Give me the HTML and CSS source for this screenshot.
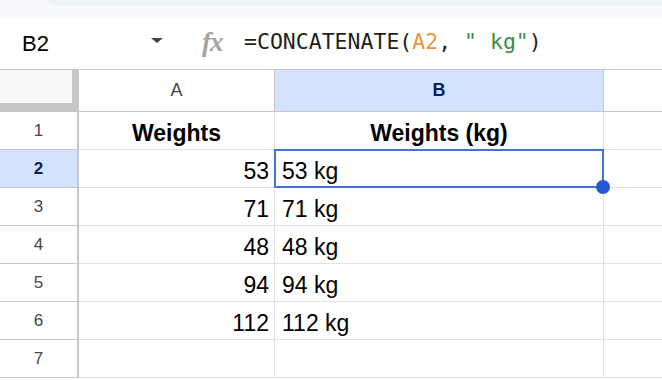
FILE: index.html
```html
<!DOCTYPE html>
<html lang="en">
<head>
    <meta charset="UTF-8">
    <title>Weights sheet</title>
    <link rel="stylesheet" href="styles.css">
</head>
<body>

    <!-- Top strip -->
    <div class="top-strip">
        <div class="toolbar-edge"></div>
    </div>

    <!-- Formula bar -->
    <div class="formula-bar">
        <div class="name-box">B2</div>
        <div class="name-arrow"></div>
        <div class="fx">fx</div>
        <div class="formula">=CONCATENATE(<span class="ref">A2</span>, <span class="str">" kg"</span>)</div>
    </div>

    <!-- Grid -->
    <div class="sheet">
        <div class="corner"></div>
        <div class="col-head">A</div>
        <div class="col-head active">B</div>
        <div class="col-head last"></div>

        <div class="row-head">1</div>
        <div class="cell bold center">Weights</div>
        <div class="cell bold center">Weights (kg)</div>
        <div class="cell last"></div>

        <div class="row-head active">2</div>
        <div class="cell num">53</div>
        <div class="cell selected">53 kg<div class="sel-box"><span class="handle"></span></div></div>
        <div class="cell last"></div>

        <div class="row-head">3</div>
        <div class="cell num">71</div>
        <div class="cell">71 kg</div>
        <div class="cell last"></div>

        <div class="row-head">4</div>
        <div class="cell num">48</div>
        <div class="cell">48 kg</div>
        <div class="cell last"></div>

        <div class="row-head">5</div>
        <div class="cell num">94</div>
        <div class="cell">94 kg</div>
        <div class="cell last"></div>

        <div class="row-head">6</div>
        <div class="cell num">112</div>
        <div class="cell">112 kg</div>
        <div class="cell last"></div>

        <div class="row-head">7</div>
        <div class="cell"></div>
        <div class="cell"></div>
        <div class="cell last"></div>
    </div>

</body>
</html>
```

FILE: styles.css
```css
body {
    margin: 0;
    width: 662px;
    height: 380px;
    overflow: hidden;
    background: white;
    font-family: "Liberation Sans", Arial, sans-serif;
    color: #000;
}

/* Top strip */
.top-strip {
    height: 18px;
    background: #f8f9fc;
}

.toolbar-edge {
    margin-left: 48px;
    height: 5px;
    background: #eef1f6;
    border-bottom-left-radius: 8px;
}

/* Formula bar */
.formula-bar {
    height: 51px;
    border-bottom: 1px solid #c7c7c7;
    display: flex;
    align-items: center;
}

.name-box {
    width: 129px;
    padding-left: 22px;
    font-size: 22px;
    line-height: 24px;
}

.name-arrow {
    width: 0;
    height: 0;
    border-left: 6.5px solid transparent;
    border-right: 6.5px solid transparent;
    border-top: 5px solid #444746;
    margin-top: -6px;
}

.fx {
    margin-left: 39px;
    width: 42px;
    font-family: "Liberation Serif", serif;
    font-style: italic;
    font-weight: bold;
    font-size: 27px;
    color: #a3a3a3;
    letter-spacing: -1px;
    margin-top: -2px;
}

.formula {
    font-family: "DejaVu Sans Mono", "Liberation Mono", monospace;
    font-size: 21.5px;
    white-space: pre;
    color: #1f1f1f;
    margin-top: -4px;
}

.formula .ref {
    color: #ea963c;
}

.formula .str {
    color: #3d8c40;
}

/* Grid */
.sheet {
    display: grid;
    grid-template-columns: 79px 196px 329px 1fr;
    grid-template-rows: 42px repeat(7, 38px);
}

.corner {
    background: #f8f9fa;
    border-right: 7px solid #c7c7c7;
    border-bottom: 9px solid #c7c7c7;
}

.col-head {
    display: flex;
    align-items: center;
    justify-content: center;
    font-size: 18px;
    color: #444746;
    border-right: 1px solid #c7c7c7;
    border-bottom: 1px solid #c7c7c7;
}

.col-head.active,
.row-head.active {
    background: #d3e3fd;
    color: #0b2256;
    font-weight: bold;
}

.row-head {
    display: flex;
    align-items: center;
    justify-content: center;
    font-size: 17px;
    color: #444746;
    border-right: 2px solid #c7c7c7;
    border-bottom: 1px solid #c7c7c7;
}

.cell {
    display: flex;
    align-items: center;
    padding: 5px 7px 0;
    font-size: 23px;
    border-right: 1px solid #e1e1e1;
    border-bottom: 1px solid #e1e1e1;
    white-space: nowrap;
}

.last {
    border-right: none;
}

.cell.bold {
    font-weight: bold;
}

.cell.center {
    justify-content: center;
}

.cell.num {
    justify-content: flex-end;
    padding-right: 5px;
}

/* Selection */
.cell.selected {
    position: relative;
}

.sel-box {
    position: absolute;
    left: -1px;
    top: -1px;
    right: -1px;
    bottom: -1px;
    border: 2px solid #4173d9;
}

.handle {
    position: absolute;
    right: -8px;
    bottom: -8px;
    width: 14px;
    height: 14px;
    border-radius: 50%;
    background: #2658d4;
}
```
